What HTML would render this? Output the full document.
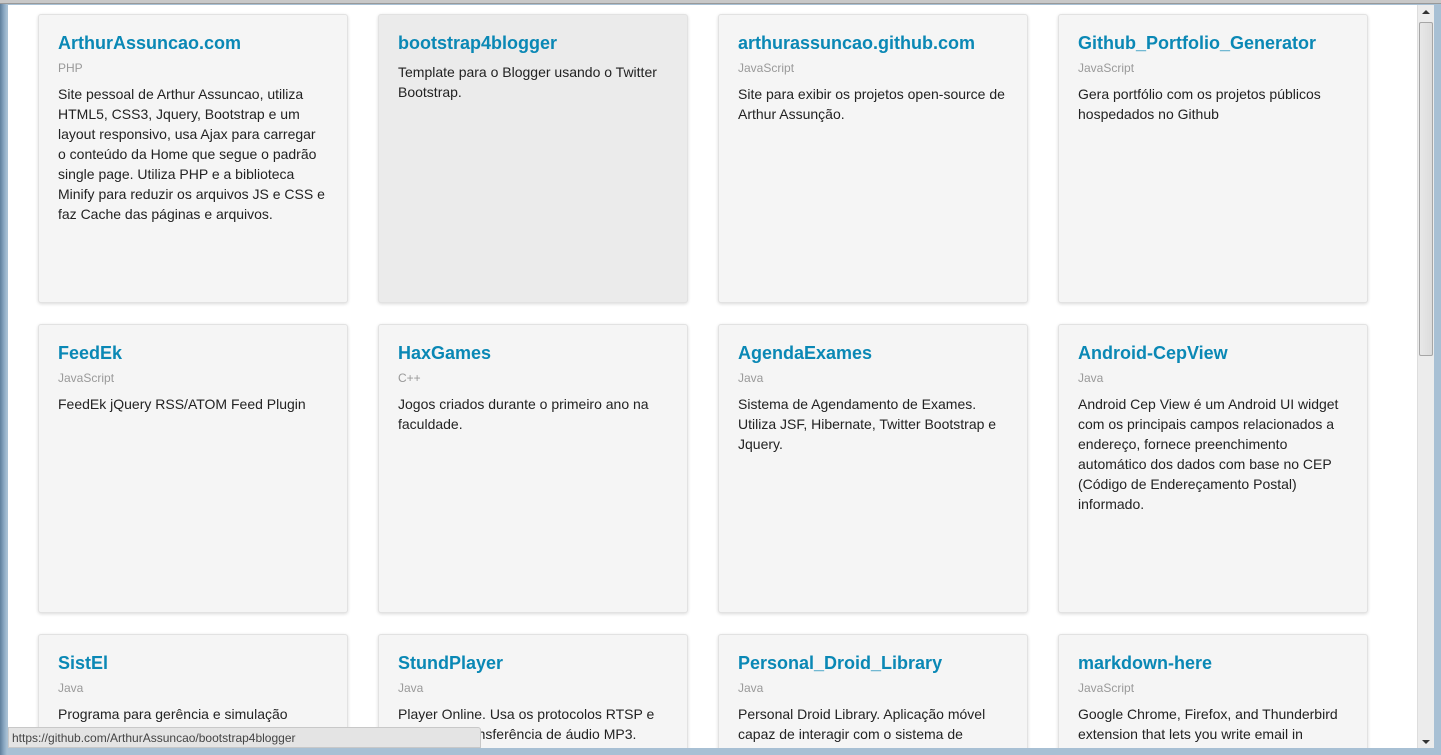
<!DOCTYPE html>
<html><head><meta charset="utf-8"><style>
*{margin:0;padding:0;box-sizing:border-box}
body{width:1441px;height:755px;overflow:hidden;background:#6d8aa6;font-family:"Liberation Sans",Arial,sans-serif;position:relative}
#frame{position:absolute;left:0;top:0;width:1441px;height:755px;background:linear-gradient(90deg,#5f7f9c,#8aa8c2 4px,#a8c0d4 7px)}
#top{position:absolute;left:0;top:0;width:1441px;height:4px;background:#c8c8c8;border-bottom:1px solid #999}
#content{position:absolute;left:8px;top:5px;width:1409px;height:743px;background:#fff;overflow:hidden}
#sb{position:absolute;left:1417px;top:5px;width:17px;height:743px;background:#ececec;border-left:1px solid #ddd}
#thumb{position:absolute;left:1px;top:17px;width:14px;height:334px;background:linear-gradient(90deg,#e8e8e8,#dcdcdc);border:1px solid #a6a6a6;border-radius:2px}
.arr{position:absolute;left:4px;width:0;height:0;border-left:4px solid transparent;border-right:4px solid transparent}
.card{position:absolute;width:310px;height:289px;background:#f5f5f5;border:1px solid #e2e2e2;border-radius:3px;box-shadow:0 1px 3px rgba(0,0,0,.15);padding:17px 22px 17px 19px;overflow:hidden}
.card.h{background:#ebebeb}
.card h2{font-size:18px;font-weight:bold;color:#0a88b5;line-height:22px;margin-bottom:6px;white-space:nowrap}
.card .l{font-size:12px;color:#999;line-height:16px;margin-bottom:8px}
.card p{font-size:14px;color:#222;line-height:20px}
#status{position:absolute;left:8px;top:727px;width:473px;height:21px;background:#e4e4e4;border:1px solid #c8c8c8;border-radius:0 3px 0 0;font-size:12px;color:#444;padding:3px 3px;line-height:14px}
</style></head><body>
<div id="frame"></div><div id="top"></div>
<div id="content">
<div class="card" style="left:30px;top:9px"><h2>ArthurAssuncao.com</h2><div class="l">PHP</div><p>Site pessoal de Arthur Assuncao, utiliza HTML5, CSS3, Jquery, Bootstrap e um layout responsivo, usa Ajax para carregar o conteúdo da Home que segue o padrão single page. Utiliza PHP e a biblioteca Minify para reduzir os arquivos JS e CSS e faz Cache das páginas e arquivos.</p></div>
<div class="card h" style="left:370px;top:9px"><h2>bootstrap4blogger</h2><p style="margin-top:8px">Template para o Blogger usando o Twitter Bootstrap.</p></div>
<div class="card" style="left:710px;top:9px"><h2>arthurassuncao.github.com</h2><div class="l">JavaScript</div><p>Site para exibir os projetos open-source de Arthur Assunção.</p></div>
<div class="card" style="left:1050px;top:9px"><h2>Github_Portfolio_Generator</h2><div class="l">JavaScript</div><p>Gera portfólio com os projetos públicos hospedados no Github</p></div>

<div class="card" style="left:30px;top:319px"><h2>FeedEk</h2><div class="l">JavaScript</div><p>FeedEk jQuery RSS/ATOM Feed Plugin</p></div>
<div class="card" style="left:370px;top:319px"><h2>HaxGames</h2><div class="l">C++</div><p>Jogos criados durante o primeiro ano na faculdade.</p></div>
<div class="card" style="left:710px;top:319px"><h2>AgendaExames</h2><div class="l">Java</div><p>Sistema de Agendamento de Exames. Utiliza JSF, Hibernate, Twitter Bootstrap e Jquery.</p></div>
<div class="card" style="left:1050px;top:319px"><h2>Android-CepView</h2><div class="l">Java</div><p>Android Cep View é um Android UI widget com os principais campos relacionados a endereço, fornece preenchimento automático dos dados com base no CEP (Código de Endereçamento Postal) informado.</p></div>

<div class="card" style="left:30px;top:629px"><h2>SistEl</h2><div class="l">Java</div><p>Programa para gerência e simulação</p></div>
<div class="card" style="left:370px;top:629px"><h2>StundPlayer</h2><div class="l">Java</div><p>Player Online. Usa os protocolos RTSP e RTP para transferência de áudio MP3.</p></div>
<div class="card" style="left:710px;top:629px"><h2>Personal_Droid_Library</h2><div class="l">Java</div><p>Personal Droid Library. Aplicação móvel capaz de interagir com o sistema de</p></div>
<div class="card" style="left:1050px;top:629px"><h2>markdown-here</h2><div class="l">JavaScript</div><p>Google Chrome, Firefox, and Thunderbird extension that lets you write email in</p></div>
</div>
<div id="sb"><div class="arr" style="top:5px;border-bottom:4px solid #333"></div><div id="thumb"></div><div class="arr" style="top:735px;border-top:4px solid #333"></div></div>
<div id="status">https://github.com/ArthurAssuncao/bootstrap4blogger</div>
</body></html>
